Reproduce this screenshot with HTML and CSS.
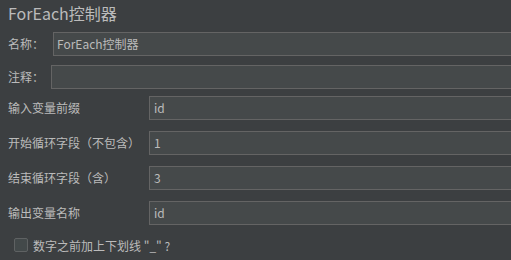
FILE: index.html
```html
<!DOCTYPE html>
<html lang="zh-CN">

<head>
    <meta charset="UTF-8">
    <title>ForEach控制器</title>
    <link rel="stylesheet" href="styles.css">
</head>

<body>
    <div class="panel">
        <div class="title">ForEach控制器</div>

        <div class="row row-name">
            <label class="label label-name">名称：</label>
            <div class="field">ForEach控制器</div>
        </div>

        <div class="row row-comment">
            <label class="label label-comment">注释：</label>
            <div class="field"></div>
        </div>

        <div class="row row-first">
            <label class="label label-wide">输入变量前缀</label>
            <div class="field field-wide">id</div>
        </div>

        <div class="row row-gap">
            <label class="label label-wide">开始循环字段（不包含）</label>
            <div class="field field-wide">1</div>
        </div>

        <div class="row row-gap">
            <label class="label label-wide">结束循环字段（含）</label>
            <div class="field field-wide">3</div>
        </div>

        <div class="row row-gap">
            <label class="label label-wide">输出变量名称</label>
            <div class="field field-wide">id</div>
        </div>

        <div class="check-row">
            <span class="checkbox"></span>
            <span class="check-text">数字之前加上下划线 "_" ?</span>
        </div>
    </div>
</body>

</html>
```

FILE: styles.css
```css
* {
    padding: 0;
    margin: 0;
    box-sizing: border-box;
}

body {
    background-color: #3c3f41;
    color: #bbbbbb;
    font-family: "Noto Sans CJK SC", "Noto Sans", sans-serif;
    font-size: 12px;
    overflow: hidden;
}

.panel {
    padding-left: 8px;
    margin-right: -10px;
}

.title {
    font-size: 16px;
    line-height: 24px;
    padding-top: 1px;
    height: 32px;
}

.row {
    display: flex;
    align-items: center;
    height: 24px;
}

.row-name {
    margin-bottom: 9px;
}

.row-comment {
    margin-bottom: 7px;
}

.row-gap {
    margin-top: 11px;
}

.label {
    flex-shrink: 0;
    line-height: 24px;
}

.label-name {
    width: 45px;
}

.label-comment {
    width: 43px;
}

.label-wide {
    width: 141px;
}

.field {
    flex: 1;
    height: 24px;
    line-height: 22px;
    border: 1px solid #646464;
    background-color: #45494a;
    padding-left: 3px;
    white-space: nowrap;
}

.field-wide {
    padding-left: 4px;
}

.check-row {
    display: flex;
    align-items: center;
    height: 20px;
    margin-top: 10px;
    padding-left: 6px;
}

.checkbox {
    width: 14px;
    height: 14px;
    border: 1px solid #5f6263;
    border-radius: 2px;
    background-color: #43494a;
    margin-right: 5px;
}
```
